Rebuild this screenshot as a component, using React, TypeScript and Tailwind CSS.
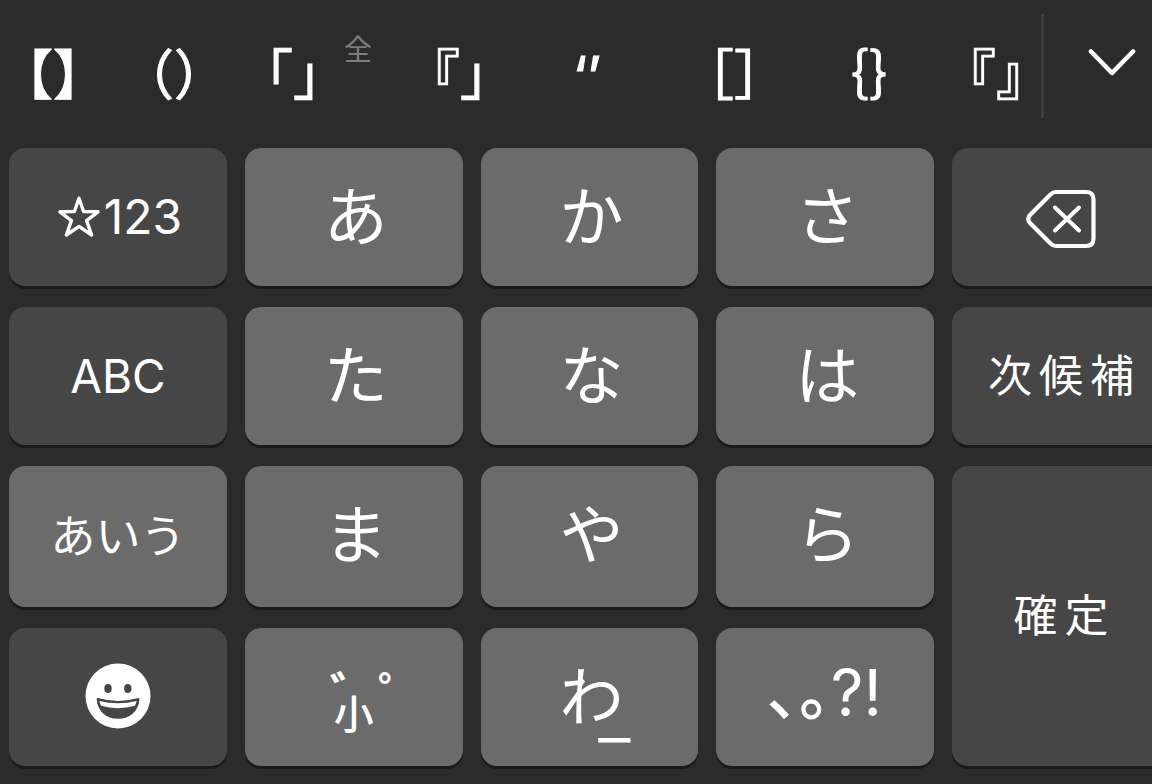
import type { ReactNode } from 'react';
import clsx from 'clsx';

type KeyProps = {
  label: string;
  dark?: boolean;
  className?: string;
  children?: ReactNode;
};

const candidates = ['【】', '（）', '「」', '『」', '‘’', '［］', '｛｝', '『』'];

const Key = ({ label, dark, className, children }: KeyProps) => (
  <button
    type="button"
    aria-label={label}
    className={clsx(
      'flex min-w-0 items-center justify-center rounded-2xl shadow-[0_3px_0_#1a1a1a]',
      dark ? 'bg-[#464646]' : 'bg-[#6b6b6b]',
      className
    )}
  >
    {children ?? <span className="pl-1 text-[64px] leading-none">{label}</span>}
  </button>
);

const Star = () => (
  <svg width="42" height="42" viewBox="0 0 42 42" fill="none" aria-hidden="true">
    <path
      d="M21 2.200 25.600 15.500 40 15.800 28.600 24.600 33.600 39 21 30.400 8.400 39 13.400 24.600 2 15.800 16.400 15.500Z"
      stroke="currentColor"
      strokeWidth="3.400"
      strokeLinejoin="round"
    />
  </svg>
);

const Backspace = () => (
  <svg width="70" height="60" viewBox="0 0 70 60" fill="none" aria-hidden="true">
    <g stroke="currentColor" strokeLinecap="round" strokeLinejoin="round">
      <path
        d="M30 3H60Q67.500 3 67.500 10.500V49.500Q67.500 57 60 57H30Q27 57 24.500 54.500L4 34Q0.500 30 4 26L24.500 5.500Q27 3 30 3Z"
        strokeWidth="4.200"
      />
      <path d="M29 18.500 53 41.500M53 18.500 29 41.500" strokeWidth="4" />
    </g>
  </svg>
);

const Smile = () => (
  <svg width="66" height="66" viewBox="0 0 66 66" aria-hidden="true">
    <circle cx="33" cy="33" r="32.500" fill="white" />
    <ellipse cx="23" cy="25.500" rx="3.700" ry="4.500" fill="#464646" />
    <ellipse cx="42.800" cy="25.500" rx="3.700" ry="4.500" fill="#464646" />
    <path
      d="M13 35Q11.500 34.700 11.700 36.500C12.500 48 21 55.800 33 55.800S53.500 48 54.500 36.500Q54.500 34.700 53 35Q33 41 13 35Z"
      fill="#464646"
    />
    <path d="M14.300 38Q33 42.500 51.700 38L50 42.800Q33 47.500 16 42.800Z" fill="white" />
  </svg>
);

const CandidateBar = () => (
  <div className="flex h-[148px]">
    <div className="grid min-w-0 grow grid-cols-[106fr_136fr_102fr_83fr_66fr_188fr_106fr_164fr_90fr]">
      {candidates.map((text, i) => (
        <button
          key={text}
          type="button"
          className={clsx(
            "flex min-w-0 items-center justify-center pt-1 text-[54px] leading-none whitespace-nowrap [-webkit-text-stroke:1px_white] [font-feature-settings:'halt']",
            i > 2 && 'order-2'
          )}
        >
          {text}
        </button>
      ))}
      <span className="order-1 pt-9 text-[28px] leading-none text-[#7d7d7d]">全</span>
    </div>
    <div className="mt-3.5 h-[104px] w-[3px] shrink-0 bg-[#3d3d3d]" />
    <button
      type="button"
      aria-label="候補を開く"
      className="flex w-[108px] shrink-0 justify-center pt-12 pl-7"
    >
      <svg width="48" height="28" viewBox="0 0 48 28" fill="none" aria-hidden="true">
        <path
          d="M3 3.500 24 25 45 3.500"
          stroke="currentColor"
          strokeWidth="4.600"
          strokeLinecap="round"
          strokeLinejoin="round"
        />
      </svg>
    </button>
  </div>
);

export default function App() {
  return (
    <div
      lang="ja"
      className="min-h-screen overflow-hidden bg-[#2b2b2b] font-['Inter','Noto_Sans_CJK_JP',sans-serif] text-white"
    >
      <CandidateBar />
      {/* last column runs off the right edge */}
      <div className="-mr-[18px] ml-[9px] grid grid-cols-5 grid-rows-[138px_138px_141px_138px] gap-x-[18px] gap-y-[21px] pb-[18px]">
        <Key label="☆123" dark className="gap-1 pl-1">
          <Star />
          <span className="text-[48px] leading-none">123</span>
        </Key>
        <Key label="あ" />
        <Key label="か" />
        <Key label="さ" />
        <Key label="削除" dark className="pt-1">
          <Backspace />
        </Key>

        <Key label="ABC" dark>
          <span className="text-[46px] leading-none">ABC</span>
        </Key>
        <Key label="た" />
        <Key label="な" />
        <Key label="は" />
        <Key label="次候補" dark className="gap-[7px] text-[44px] leading-none">
          <span>次</span>
          <span>候</span>
          <span>補</span>
        </Key>

        <Key label="あいう">
          <span className="text-[45px] leading-none">あいう</span>
        </Key>
        <Key label="ま" className="pb-1" />
        <Key label="や" className="pb-1" />
        <Key label="ら" className="pb-1" />
        <Key label="確定" dark className="row-span-2 gap-[7px] text-[44px] leading-none">
          <span>確</span>
          <span>定</span>
        </Key>

        <Key label="絵文字" dark className="pb-0.5">
          <Smile />
        </Key>
        <Key label="濁点 半濁点 小文字" className="flex-col pt-3">
          <span className="pl-12 text-[48px] leading-none font-bold">゛゜</span>
          <span className="-mt-6 text-[40px] leading-none font-medium">小</span>
        </Key>
        <Key label="わ_" className="relative">
          <span className="pl-1 text-[64px] leading-none">わ</span>
          <span className="absolute right-[68px] bottom-[18px] text-[72px] leading-none font-light">
            _
          </span>
        </Key>
        <Key label="、。?!" className="pb-2">
          <span className="text-[62px] leading-none [-webkit-text-stroke:1px_white]">､｡</span>
          <span className="text-[64px] leading-none">?!</span>
        </Key>
      </div>
    </div>
  );
}
